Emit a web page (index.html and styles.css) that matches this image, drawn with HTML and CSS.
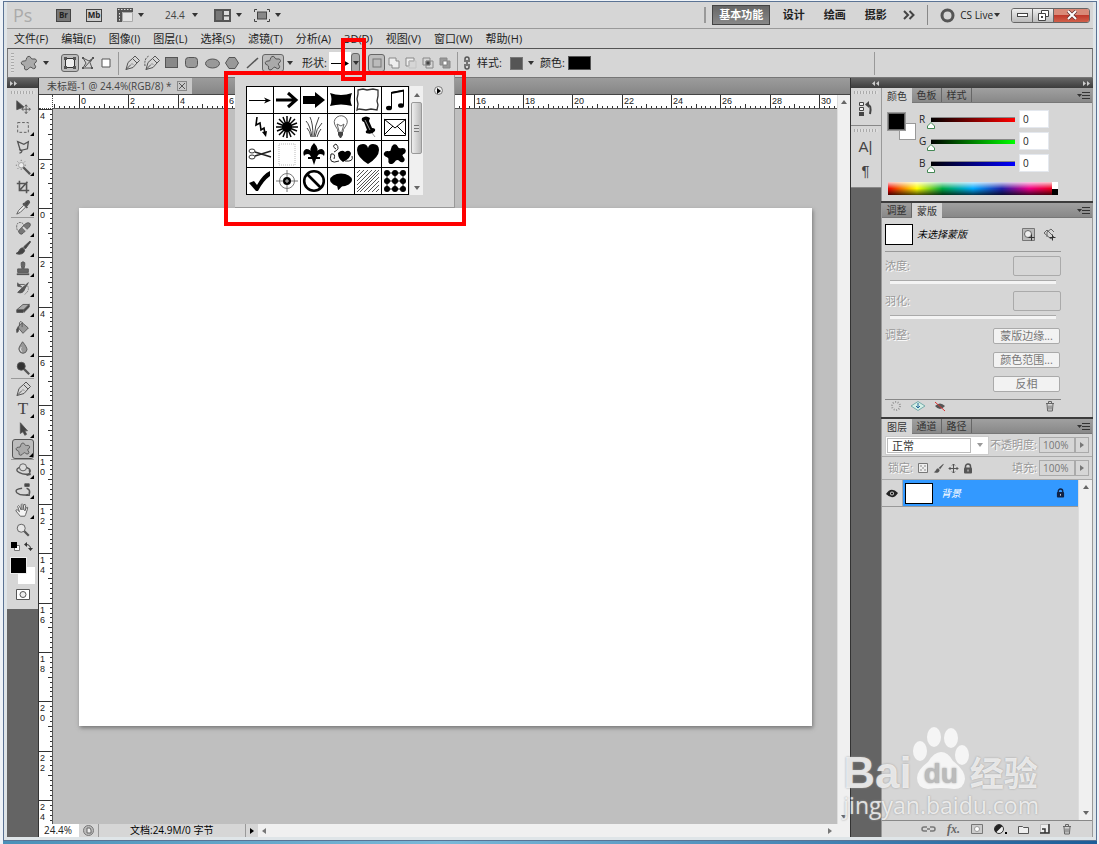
FILE: index.html
```html
<!DOCTYPE html>
<html lang="zh-CN">
<head>
  <meta charset="UTF-8">
  <meta name="viewport" content="width=device-width, initial-scale=1.0">
  <title>未标题-1 @ 24.4%(RGB/8)</title>
  <link rel="stylesheet" href="styles.css">
</head>
<body>
  <!-- shared symbols -->
  <svg class="defs" width="0" height="0">
    <symbol id="blob" viewBox="0 0 18 16"><path d="M8 1.500q2-1 3 1.500q.5 1.300 2 1q3-.8 3.500 1.500q0 2-2 2.800q-.8.700.3 1.700q1.700 1.800.2 3.300q-1.500 1-3-.4q-1-1.400-2.400-.4q-1.600 2.500-3.600 2.500q-2-.3-1.500-2.800q.2-1.500-1-2Q.8 9.400 1.300 7.500Q2 5.800 4 6q2.300.4 2.200-1.500Q6.500 2.300 8 1.500z"/></symbol>
    <symbol id="pen" viewBox="0 0 16 16"><path d="M2 14.500L4 7.500l4.500-4 4.500 4.500-4 4.500zM2 14.500l5-5M8.500 3.500L11 1l4.500 4.500L13 8M8 8.500l1 1"/></symbol>
    <symbol id="brush" viewBox="0 0 16 16"><path d="M15 1L8.500 7l1.800 2L15.500 2zM7.600 7.800C4 8 5 12 1 13.500c3.500 1.500 8.500.5 8.700-3.500z" fill="currentColor"/></symbol>
    <symbol id="lock" viewBox="0 0 10 11"><path d="M2.500 5V3.500a2.500 2.500 0 0 1 5 0V5" fill="none" stroke="currentColor" stroke-width="1.500"/><rect x="1" y="4.500" width="8" height="6" rx="1" fill="currentColor"/><path d="M5 6.500v2" stroke="#ddd"/></symbol>
    <symbol id="trash" viewBox="0 0 12 12"><path d="M2 3.500h8M4.500 3V1.500h3V3M3 4l.6 7h4.800L9 4M5 5.500v4M7 5.500v4" fill="none" stroke="currentColor"/></symbol>
    <symbol id="flyout" viewBox="0 0 13 9"><path d="M0 3h5L2.500 6z" fill="currentColor"/><path d="M5 1.500h8M5 4.500h8M5 7.500h8" stroke="currentColor"/></symbol>
  </svg>

  <div class="desktop">
    <div class="window">
      <!-- title bar -->
      <header class="titlebar">
        <span class="ps">Ps</span>
        <button class="badge badge-br">Br</button>
        <button class="badge badge-mb">Mb</button>
        <button class="tb-btn film" aria-label="查看额外内容"><svg width="16" height="14" viewBox="0 0 16 14"><path d="M0 0h16v4H5v10H0z" fill="#555"/><path d="M1 1.500h14M2.500 5v9" stroke="#ddd" stroke-dasharray="1.500 1.500"/><path d="M5.500 4.500h10v9h-10z" fill="#e4e4e4" stroke="#aaa"/></svg><i class="caret"></i></button>
        <button class="tb-btn zoomlevel">24.4<i class="caret"></i></button>
        <button class="tb-btn arrange" aria-label="排列文档"><svg width="17" height="13" viewBox="0 0 17 13"><rect width="17" height="13" fill="#555"/><path d="M2 2h6v9H2z" fill="#777"/><path d="M10 2h5v4h-5zM10 7.500h5V11h-5z" fill="#ddd"/></svg><i class="caret"></i></button>
        <button class="tb-btn screen" aria-label="屏幕模式"><svg width="16" height="13" viewBox="0 0 16 13"><rect x="3.500" y="3" width="9" height="7" fill="#888" stroke="#444"/><path d="M.5 3V.5H3M13 .5h2.500V3M.5 10v2.500H3M13 12.500h2.500V10" fill="none" stroke="#444"/></svg><i class="caret"></i></button>

        <nav class="workspaces">
          <button class="ws active">基本功能</button>
          <button class="ws">设计</button>
          <button class="ws">绘画</button>
          <button class="ws">摄影</button>
          <button class="more" aria-label="更多"><svg width="12" height="10" viewBox="0 0 12 10"><path d="M1 1l4 4-4 4M6.500 1l4 4-4 4" fill="none" stroke="#444" stroke-width="2"/></svg></button>
        </nav>
        <button class="cslive"><svg width="15" height="15" viewBox="0 0 15 15"><circle cx="7.500" cy="7.500" r="5.500" fill="none" stroke="#555" stroke-width="3"/></svg>CS Live<i class="caret"></i></button>
        <div class="winbtns">
          <button class="min" aria-label="最小化"><svg width="11" height="6" viewBox="0 0 11 6"><rect x=".5" y="1.500" width="10" height="3" fill="#fff" stroke="#444"/></svg></button>
          <button class="max" aria-label="还原"><svg width="11" height="11" viewBox="0 0 11 11"><path d="M3.500.5h7v6h-7z" fill="#fff" stroke="#444"/><path d="M.5 3.500h7v7h-7z" fill="#fff" stroke="#444"/><path d="M3 6h2v2H3z" fill="#444"/></svg></button>
          <button class="close" aria-label="关闭"><svg width="12" height="10" viewBox="0 0 12 10"><path d="M2 1l8 8M10 1L2 9" stroke="#633" stroke-width="3.500"/><path d="M2 1l8 8M10 1L2 9" stroke="#fff" stroke-width="2"/></svg></button>
        </div>
      </header>

      <!-- menu bar -->
      <nav class="menubar">
        <a href="#">文件(F)</a><a href="#">编辑(E)</a><a href="#">图像(I)</a><a href="#">图层(L)</a><a href="#">选择(S)</a><a href="#">滤镜(T)</a><a href="#">分析(A)</a><a href="#">3D(D)</a><a href="#">视图(V)</a><a href="#">窗口(W)</a><a href="#">帮助(H)</a>
      </nav>

      <!-- options bar -->
      <div class="options">
        <i class="vgrip"></i>
        <button class="opt preset" aria-label="工具预设"><svg width="18" height="16" class="blob"><use href="#blob"/></svg></button>
        <i class="caret"></i>
        <div class="opt-group modes">
          <button class="opt on" aria-label="形状图层"><svg width="14" height="14" viewBox="0 0 14 14"><path d="M2.500 2.500h9v9h-9z" fill="#eee" stroke="#333"/><path d="M1 1h3v3H1zM10 1h3v3h-3zM1 10h3v3H1zM10 10h3v3h-3z" fill="#555"/></svg></button>
          <button class="opt" aria-label="路径"><svg width="14" height="14" viewBox="0 0 14 14"><path d="M2 2l3 5-3 5h9L9 6.500 12 2 8 5zM4 11l7-8" fill="none" stroke="#555"/><path d="M1 1h2v2H1zM11 1h2v2h-2zM1 11h2v2H1zM10 11h2v2h-2z" fill="#555"/></svg></button>
          <button class="opt" aria-label="填充像素"><svg width="10" height="10" viewBox="0 0 10 10"><path d="M1 1h8v8H1z" fill="#fff" stroke="#555"/></svg></button>
        </div>
        <i class="sep"></i>
        <div class="opt-group tools-row">
          <button class="opt" aria-label="钢笔"><svg width="16" height="16" class="line"><use href="#pen"/></svg></button>
          <button class="opt" aria-label="自由钢笔"><svg width="16" height="16" class="line"><use href="#pen"/><path d="M1 11Q0 3 5 1" stroke-dasharray="2 1"/></svg></button>
          <button class="opt" aria-label="矩形"><svg width="14" height="12"><rect x=".5" y=".5" width="12" height="10" fill="#888" stroke="#555"/></svg></button>
          <button class="opt" aria-label="圆角矩形"><svg width="14" height="12"><rect x=".5" y=".5" width="12" height="10" rx="3" fill="#999" stroke="#555"/></svg></button>
          <button class="opt" aria-label="椭圆"><svg width="15" height="11"><ellipse cx="7.500" cy="5.500" rx="7" ry="4.500" fill="#999" stroke="#555"/></svg></button>
          <button class="opt" aria-label="多边形"><svg width="14" height="12"><path d="M4 .5h6L13.500 6 10 11.500H4L.5 6z" fill="#999" stroke="#555"/></svg></button>
          <button class="opt" aria-label="直线"><svg width="13" height="12"><path d="M1 11L12 1" stroke="#555" stroke-width="1.500"/></svg></button>
          <button class="opt on wide" aria-label="自定形状"><svg width="18" height="16" class="blob"><use href="#blob"/></svg></button>
          <i class="caret"></i>
        </div>
        <span class="opt-label shape-label">形状:</span>
        <button class="shape-preview" aria-label="当前形状"><svg width="18" height="7" viewBox="0 0 18 7"><path d="M0 3.500h15" stroke="#000"/><path d="M12 0l6 3.500L12 7l2-3.500z"/></svg></button>
        <button class="shape-drop" aria-label="打开形状拾色器"><i class="caret"></i></button>
        <div class="opt-group combine">
          <button class="opt on" aria-label="新建"><svg width="12" height="12"><rect x="2" y="2" width="8" height="8" fill="#bbb" stroke="#777"/></svg></button>
          <button class="opt" aria-label="添加"><svg width="12" height="12" class="thin"><path d="M1 1h7v3h3v7H4V8H1z" fill="#eee"/></svg></button>
          <button class="opt" aria-label="减去"><svg width="12" height="12" class="thin"><path d="M1 1h8v3H4v5H1z" fill="#eee"/><path d="M4 4h7v7H4z" stroke="#c4c4c4"/></svg></button>
          <button class="opt" aria-label="交叉"><svg width="12" height="12" class="thin"><path d="M1 1h7v7H1zM4 4h7v7H4z"/><path d="M4 4h4v4H4z" fill="#444"/></svg></button>
          <button class="opt" aria-label="排除"><svg width="12" height="12" class="thin"><path d="M1 1h7v7H1zM4 4h7v7H4z" fill="#999"/><path d="M4 4h4v4H4z" fill="#fff"/></svg></button>
        </div>
        <i class="sep sep2"></i>
        <button class="link" aria-label="链接"><svg width="8" height="14" viewBox="0 0 8 14"><path d="M2 6V3a2 2 0 0 1 4 0v3M2 8v3a2 2 0 0 0 4 0V8M4 4v6" fill="none" stroke="#555" stroke-width="1.500"/></svg></button>
        <span class="opt-label">样式:</span>
        <button class="style-swatch" aria-label="样式"></button>
        <i class="caret"></i>
        <span class="opt-label color-label">颜色:</span>
        <button class="color-swatch" aria-label="颜色"></button>
        <i class="sep sep-end"></i>
      </div>

      <div class="workspace">
        <!-- toolbox -->
        <aside class="toolbox">
          <div class="dark-head left"><svg width="7" height="5" viewBox="0 0 7 5"><path d="M0 0l3 2.500L0 5zM4 0l3 2.500L4 5z" fill="#ccc"/></svg></div>
          <div class="tools">
            <i class="hgrip"></i>
            <button class="tool nofly" aria-label="移动"><svg viewBox="0 0 18 18"><path d="M2 2l8 7-8 3z" fill="#444"/><path d="M12.500 7v9M8 11.500h9M11 8.500l1.500-2 1.500 2M11 14.500l1.500 2 1.500-2M9.500 10l-2 1.500 2 1.500M15.500 10l2 1.500-2 1.500"/></svg></button>
            <button class="tool" aria-label="选框"><svg viewBox="0 0 18 18"><path d="M3 4h12v11H3z" stroke-dasharray="3 2"/></svg></button>
            <button class="tool" aria-label="套索"><svg viewBox="0 0 18 18"><path d="M3 3l7 3 5-3-1 8-8 2zM6 13l-1-2M6 12q3 1 1 3l-2 1" stroke-width="1.500"/></svg></button>
            <button class="tool" aria-label="魔棒"><svg viewBox="0 0 18 18"><path d="M9 9l8 8" stroke-width="2.500"/><circle cx="7" cy="7" r="3" fill="#eee" stroke="#999"/><path d="M7 1v2M7 11v2M1 7h2M11 7h2M3 3l1 1M11 3l-1 1M3 11l1-1" stroke-dasharray="1 1"/></svg></button>
            <button class="tool" aria-label="裁剪"><svg viewBox="0 0 18 18"><path d="M5 2v11h11M2 5h11v11M5 13l9-10" stroke-width="1.800"/></svg></button>
            <button class="tool" aria-label="吸管"><svg viewBox="0 0 18 18"><path d="M10 6l3-3q3-2 3 1l-3 4zM9 5l5 5" fill="#444" stroke-width="2"/><path d="M10 7l-6 6-2 4 4-2 6-6z" fill="#eee"/></svg></button>
            <i class="tsep"></i>
            <button class="tool" aria-label="修复画笔"><svg viewBox="0 0 18 18"><path d="M8 13Q1 14 2 6q1-4 5-3 3 1 3 4" stroke-dasharray="2 1"/><path d="M5 15q-2-2 0-4l7-7q3-2 5 0 1 2-1 4l-7 7q-2 2-4 0z" fill="#777"/><path d="M9 8l4 4" stroke="#ddd" stroke-width="2"/></svg></button>
            <button class="tool" aria-label="画笔"><svg viewBox="0 0 16 16"><use href="#brush"/></svg></button>
            <button class="tool" aria-label="图章"><svg viewBox="0 0 18 18"><path d="M7 3q2-2 4 0v3l-1 4h5v4H3v-4h5L7 6z" fill="#666"/><path d="M2 16h14" stroke-width="2"/></svg></button>
            <button class="tool" aria-label="历史记录画笔"><svg viewBox="0 0 18 18"><path d="M3 5h8M3 3v4l5 1M15 3L8 9l-5 5q6 2 8-4z" fill="#555"/><path d="M13 5q5 6-2 11" stroke-dasharray="1 1"/></svg></button>
            <button class="tool" aria-label="橡皮擦"><svg viewBox="0 0 18 18"><path d="M2 11l7-6h7l-6 6z" fill="#aaa"/><path d="M2 11v3h7l1-3M10 14l6-6V5l-6 6z" fill="#444"/></svg></button>
            <button class="tool" aria-label="油漆桶"><svg viewBox="0 0 18 18"><path d="M3 8l5-5 7 6-6 6z" fill="#999"/><path d="M5 7V3q2-3 3 0v5"/><path d="M4 8q-3 1-2 6 2 0 2-3z" fill="#444"/></svg></button>
            <button class="tool" aria-label="模糊"><svg viewBox="0 0 18 18"><path d="M8.500 2q-5 7-4 9 1 4 4.500 4t4.500-4q0-3-5-9z" fill="#999"/><path d="M7 8q-2 4 1 5" stroke="#eee"/></svg></button>
            <button class="tool" aria-label="减淡"><svg viewBox="0 0 18 18"><circle cx="7" cy="7" r="4.500" fill="#333"/><path d="M10 10l6 6" stroke-width="2.500"/></svg></button>
            <i class="tsep"></i>
            <button class="tool" aria-label="钢笔"><svg viewBox="0 0 16 16"><use href="#pen"/></svg></button>
            <button class="tool type" aria-label="文字">T</button>
            <button class="tool" aria-label="路径选择"><svg viewBox="0 0 18 18"><path d="M6 2v12l3-2 2 4 2-1-2-4h3z" fill="#444"/></svg></button>
            <button class="tool on" aria-label="自定形状"><svg viewBox="0 0 18 16" class="blob"><use href="#blob"/></svg></button>
            <i class="tsep"></i>
            <button class="tool" aria-label="3D 旋转"><svg viewBox="0 0 18 18"><circle cx="9" cy="6" r="4" fill="#ddd"/><path d="M5 6q-6 3 0 6 6 3 11 1M16 9l1 5-4 1M13 6q5 2 4 5" stroke-width="1.500"/></svg></button>
            <button class="tool" aria-label="3D 相机"><svg viewBox="0 0 18 18"><path d="M8 7q-9 1-6 5 5 4 13 2M13 7q5 2 3 7M16 11l0 4-4 0" stroke-width="1.500"/><path d="M11 2h5v3h-5z" fill="#444"/></svg></button>
            <button class="tool" aria-label="抓手"><svg viewBox="0 0 18 18"><path d="M6 16l-5-6q0-2 2-1l2 2-2-6q1-2 2 0l2 4V3q1-2 2 0v6l1-6q2-1 2 1l-1 6 2-4q2-1 1 2l-2 6-1 2z" fill="#f4f4f4"/></svg></button>
            <button class="tool nofly" aria-label="缩放"><svg viewBox="0 0 18 18"><circle cx="7" cy="7" r="4.500" fill="#e8e8e8"/><path d="M10.500 10.500l5 5" stroke-width="2.500"/></svg></button>
            <div class="mini-row">
              <button aria-label="默认颜色"><svg width="9" height="9"><path d="M3.500 3.500h5v5h-5z" fill="#fff" stroke="#777"/><path d="M0 0h6v6H0z"/></svg></button>
              <button aria-label="切换颜色"><svg width="9" height="9"><path d="M2 2.500q4.500 0 4.500 4.500" fill="none" stroke="#333"/><path d="M0 2.500L3 0v5zM6.500 9L4 6h5z" fill="#333"/></svg></button>
            </div>
            <div class="fgbg"><button class="bg" aria-label="背景色"></button><button class="fg" aria-label="前景色"></button></div>
            <button class="quickmask" aria-label="快速蒙版"><svg width="14" height="11"><path d="M.5.500h13v10H.5z" fill="#fff" stroke="#555"/><circle cx="7" cy="5.500" r="3" fill="#eee" stroke="#555"/></svg></button>
          </div>
        </aside>

        <!-- document -->
        <main class="document">
          <div class="doc-tabs"><div class="doc-tab">未标题-1 @ 24.4%(RGB/8) *<button aria-label="关闭文档"><svg width="6" height="6"><path d="M0 0l6 6M6 0L0 6" stroke="#555"/></svg></button></div></div>
          <div class="doc-body">
            <div class="ruler-corner"></div>
            <svg class="ruler-h" id="rulerH"></svg>
            <svg class="ruler-v" id="rulerV"></svg>
            <div class="canvas-area"><div class="canvas"></div></div>
            <div class="vscroll"><i class="up"></i><i class="down"></i></div>
          </div>
          <footer class="status">
            <input class="status-zoom" aria-label="缩放" value="24.4%">
            <button class="status-icon" aria-label="版本"><svg width="11" height="11"><circle cx="5.500" cy="5.500" r="5" fill="#bbb" stroke="#777"/><path d="M4 3h3l1 2v3H4z" fill="#eee" stroke="#666"/></svg></button>
            <span class="status-doc">文档:24.9M/0 字节</span>
            <button class="status-next" aria-label="状态菜单"><i class="right"></i></button>
            <div class="hscroll"><i class="left"></i><i class="right"></i></div>
          </footer>
        </main>

        <!-- docks -->
        <div class="docks">
          <div class="dark-head both"><svg width="7" height="5" viewBox="0 0 7 5"><path d="M3 0L0 2.500 3 5zM7 0L4 2.500 7 5z" fill="#ccc"/></svg><svg width="7" height="5" viewBox="0 0 7 5"><path d="M0 0l3 2.500L0 5zM4 0l3 2.500L4 5z" fill="#ccc"/></svg></div>
          <div class="dock-cols">
            <aside class="icon-dock">
              <div class="icon-group"><i class="hgrip"></i>
                <button aria-label="历史记录"><svg width="14" height="16" viewBox="0 0 14 16"><path d="M.5 1.500h4v3h-4zM.5 6.500h4v3h-4z" fill="#eee" stroke="#444"/><path d="M0 11h5v4H0z" fill="#444"/><path d="M8 4q5-1 3 9" fill="none" stroke="#444" stroke-width="2"/><path d="M10 0v7L6 3.500z" fill="#444"/></svg></button>
              </div>
              <div class="icon-group"><i class="hgrip"></i>
                <button class="char" aria-label="字符">A|</button>
                <button class="char" aria-label="段落">¶</button>
              </div>
            </aside>

            <aside class="panels">
              <section class="panel color-panel">
                <div class="tabs"><button class="tab on">颜色</button><button class="tab">色板</button><button class="tab">样式</button><button class="fly" aria-label="面板菜单"><svg width="13" height="9"><use href="#flyout"/></svg></button></div>
                <div class="color-body">
                  <div class="color-top">
                    <div class="pair"><button class="bg" aria-label="背景色"></button><button class="fg" aria-label="前景色"></button></div>
                    <div class="sliders">
                      <div class="srow"><label for="r">R</label><input class="r" id="r" type="range" min="0" max="255" value="0"><input type="text" aria-label="R 值" value="0"></div>
                      <div class="srow"><label for="g">G</label><input class="g" id="g" type="range" min="0" max="255" value="0"><input type="text" aria-label="G 值" value="0"></div>
                      <div class="srow"><label for="b">B</label><input class="b" id="b" type="range" min="0" max="255" value="0"><input type="text" aria-label="B 值" value="0"></div>
                    </div>
                  </div>
                  <div class="spectrum"><i></i></div>
                </div>
              </section>

              <section class="panel mask-panel">
                <div class="tabs"><button class="tab">调整</button><button class="tab on">蒙版</button><button class="fly" aria-label="面板菜单"><svg width="13" height="9"><use href="#flyout"/></svg></button></div>
                <div class="mask-body">
                  <div class="mask-top">
                    <i class="thumb"></i><span>未选择蒙版</span>
                    <button aria-label="像素蒙版"><svg width="13" height="13"><path d="M.5.500h12v12H.5z" fill="#bbb" stroke="#777"/><circle cx="6" cy="6" r="3.500" fill="#eee" stroke="#666"/><path d="M9.500 6.500v6M6.500 9.500h6" stroke="#333"/></svg></button>
                    <button aria-label="矢量蒙版"><svg width="13" height="13"><path d="M1 5l3-3 7 7-3 2zM4 9V4l4-3 3 3" fill="none" stroke="#666"/><path d="M9.500 6.500v6M6.500 9.500h6" stroke="#333"/></svg></button>
                  </div>
                  <div class="mrow"><label for="density">浓度:</label><input id="densityVal" aria-label="浓度值" type="text" disabled></div>
                  <input class="flat" id="density" type="range" disabled>
                  <div class="mrow"><label for="feather">羽化:</label><input id="featherVal" aria-label="羽化值" type="text" disabled></div>
                  <input class="flat" id="feather" type="range" disabled>
                  <div class="adjust"><span>调整:</span><div class="adjust-btns"><button disabled>蒙版边缘...</button><button disabled>颜色范围...</button><button disabled>反相</button></div></div>
                  <div class="mask-foot">
                    <button aria-label="载入选区"><svg width="12" height="12"><circle cx="6" cy="6" r="4" fill="none" stroke="#999" stroke-dasharray="1 1.500" stroke-width="2"/></svg></button>
                    <button aria-label="应用蒙版"><svg width="14" height="10"><path d="M0 5l7-4.500L14 5 7 9.500z" fill="#d4efe6" stroke="#7aa"/><path d="M7 2v5M5 5l2 2 2-2" fill="none" stroke="#269"/></svg></button>
                    <button aria-label="停用蒙版"><svg width="12" height="11"><path d="M1 5q5-5 10 0-5 6-10 0z" fill="#555"/><path d="M1 1l10 9" stroke="#d33"/></svg></button>
                    <button class="del" aria-label="删除蒙版"><svg width="12" height="12"><use href="#trash"/></svg></button>
                  </div>
                </div>
              </section>

              <section class="panel layer-panel">
                <div class="tabs"><button class="tab on">图层</button><button class="tab">通道</button><button class="tab">路径</button><button class="fly" aria-label="面板菜单"><svg width="13" height="9"><use href="#flyout"/></svg></button></div>
                <div class="lrow">
                  <div class="blend"><select aria-label="混合模式"><option>正常</option></select><i class="caret"></i></div>
                  <label class="dim" for="opacity">不透明度:</label>
                  <input id="opacity" type="text" value="100%" disabled><button class="step" aria-label="不透明度滑块"><i class="right"></i></button>
                </div>
                <div class="lrow">
                  <span class="dim lock-label">锁定:</span>
                  <button class="lk" aria-label="锁定透明像素"><svg width="10" height="10"><path d="M.5.500h9v9h-9z" fill="#eee" stroke="#777"/><path d="M2 2h2v2H2zM6 2h2v2H6zM4 4h2v2H4zM2 6h2v2H2zM6 6h2v2H6z" fill="#bbb"/></svg></button>
                  <button class="lk" aria-label="锁定图像像素"><svg width="11" height="11"><use href="#brush"/></svg></button>
                  <button class="lk" aria-label="锁定位置"><svg width="11" height="11"><path d="M5.500 1v9M1 5.500h9M4 2.500L5.500 1 7 2.500M4 8.500L5.500 10 7 8.500M2.500 4L1 5.500 2.500 7M8.500 4L10 5.500 8.500 7" fill="none" stroke="#555"/></svg></button>
                  <button class="lk" aria-label="锁定全部"><svg width="10" height="11"><use href="#lock"/></svg></button>
                  <label class="dim fill-label" for="fill">填充:</label>
                  <input id="fill" type="text" value="100%" disabled><button class="step" aria-label="填充滑块"><i class="right"></i></button>
                </div>
                <div class="layers">
                  <div class="layer-list">
                    <div class="layer">
                      <button class="eye" aria-label="可见性"><svg width="12" height="9"><path d="M0 5q5-8 12-1-5 8-12 1z" fill="#222"/><circle cx="6" cy="4.500" r="2" fill="#ccc"/><circle cx="6" cy="4.500" r="1"/></svg></button>
                      <div class="layer-main"><i class="thumb"></i><span>背景</span><svg class="lk" width="9" height="10"><use href="#lock"/></svg></div>
                    </div>
                  </div>
                  <div class="vscroll"><i class="up"></i><i class="down"></i></div>
                </div>
                <div class="layer-foot">
                  <button aria-label="链接图层"><svg width="15" height="8"><path d="M6 4H9M6 2H3a2 2 0 0 0 0 4h3M9 2h3a2 2 0 0 1 0 4H9" fill="none" stroke="#777" stroke-width="1.500"/></svg></button>
                  <button class="fx" aria-label="图层样式">fx.</button>
                  <button aria-label="添加蒙版"><svg width="12" height="10"><path d="M.5.500h11v9H.5z" fill="#ccc" stroke="#777"/><circle cx="6" cy="5" r="2.500" fill="#fff" stroke="#999"/></svg></button>
                  <button aria-label="调整图层"><svg width="13" height="10"><circle cx="5" cy="5" r="4.500" fill="#eee" stroke="#333"/><path d="M2 8.500A4.500 4.500 0 0 1 8.500 2z" fill="#222"/><path d="M11 8h2v2h-2z"/></svg></button>
                  <button aria-label="新建组"><svg width="11" height="9"><path d="M.5 1.500h4l1 1h5v6H.5z" fill="#eee" stroke="#555"/></svg></button>
                  <button aria-label="新建图层"><svg width="10" height="10"><path d="M.5.500h8v8h-8z" fill="#eee" stroke="#bbb"/><path d="M9 0v9H0M5 9V5H2" fill="none" stroke="#333" stroke-width="1.500"/></svg></button>
                  <button aria-label="删除图层"><svg width="12" height="12"><use href="#trash"/></svg></button>
                </div>
              </section>
            </aside>
          </div>
        </div>
      </div>
    </div>
    <div class="taskbar"></div>
  </div>

  <!-- shape picker popup -->
  <div class="picker">
    <div class="shape-grid">
      <button aria-label="箭头 1"><svg viewBox="0 0 26 26"><path d="M2 13.500h18" stroke="#000"/><path d="M17 10.500l7 3-7 3 2-3z"/></svg></button>
      <button aria-label="箭头 2"><svg viewBox="0 0 26 26"><path d="M2 13h19M14 6l8 7-8 7" fill="none" stroke="#000" stroke-width="3"/></svg></button>
      <button aria-label="箭头 3"><svg viewBox="0 0 26 26"><path d="M2 9h12V5l10 8-10 8v-4H2z"/></svg></button>
      <button aria-label="横幅"><svg viewBox="0 0 26 26"><path d="M2 6q11 4 22 0-3 7 0 13-11-3-22 0 3-7 0-13z"/></svg></button>
      <button aria-label="画框"><svg viewBox="0 0 26 26"><path d="M3 3l5-1 4 1 6-1 5 1v6l-1 5 1 4-1 5-6-1-5 1-7-1-2 1 1-6-1-5 1-5z" fill="none" stroke="#333" stroke-width="1.300"/></svg></button>
      <button aria-label="音符"><svg viewBox="0 0 26 26"><path d="M9.500 21V5.500l12-2V18" fill="none" stroke="#000"/><path d="M9 5l13-2.500v2L9 7z"/><ellipse cx="7" cy="21" rx="3" ry="2.300"/><ellipse cx="19" cy="18.500" rx="3" ry="2.300"/></svg></button>
      <button aria-label="闪电"><svg viewBox="0 0 26 26"><path d="M10 3l-1 8 4-2 1 7 3-2 1 6" fill="none" stroke="#000" stroke-width="1.600"/><path d="M15 18l5-1-1 6z"/></svg></button>
      <button aria-label="星爆"><svg viewBox="0 0 26 26"><circle cx="13" cy="13" r="5"/><path d="M13 2v22M2 13h22M5 5l16 16M21 5L5 21M9 3l8 20M17 3L9 23M3 9l20 8M3 17l20-8" stroke="#000" stroke-width="1.500"/></svg></button>
      <button aria-label="草"><svg viewBox="0 0 26 26"><path d="M11 23Q9 11 5 7M12 23Q12 9 9 3M13 23Q14 11 18 3M14 23q1-8 7-14M10 23q-1-6-4-9M16 23q2-6 4-8" fill="none" stroke="#444"/></svg></button>
      <button aria-label="灯泡"><svg viewBox="0 0 26 26"><path d="M10 18q0-3-2-5-4-6 1-10 5-3 9 1 3 4-1 9-2 2-2 5zM11 17l-2-7 4 2 3-2-2 7" fill="none" stroke="#666"/><path d="M10 18h5v3l-2 3h-1l-2-3z" fill="#444"/></svg></button>
      <button aria-label="图钉"><svg viewBox="0 0 26 26"><path d="M7 4q4-3 8 0l-1 3 3 7q4 0 3 3-3 4-9 2-1-2 1-3L9 8Q6 7 7 4z"/><path d="M10 6l5 10M17 19l3 4" stroke="#999"/></svg></button>
      <button aria-label="信封"><svg viewBox="0 0 26 26"><path d="M2.500 5.500h21v16h-21zM2 5l11 9L24 5M2 21l9-9M24 21l-9-9" fill="none" stroke="#000"/></svg></button>
      <button aria-label="剪刀"><svg viewBox="0 0 26 26"><ellipse cx="5" cy="10" rx="3" ry="2" fill="none" stroke="#333"/><ellipse cx="5" cy="16" rx="3" ry="2" fill="none" stroke="#333"/><path d="M8 11l16 5M8 15l16-5" stroke="#222" stroke-width="1.500"/></svg></button>
      <button aria-label="邮票"><svg viewBox="0 0 26 26"><path d="M5 3h16v21H5z" fill="none" stroke="#bbb" stroke-dasharray="1 1"/></svg></button>
      <button aria-label="百合花"><svg viewBox="0 0 26 26"><path d="M13 2q6 6 2 11 1-5 6-5 4 2 2 7-1-2-4-2-2 0-3 3h3v2h-4l-2 6-2-6H7v-2h3q-1-3-3-3-3 0-4 2-2-5 2-7 5 0 6 5-4-5 2-11z"/></svg></button>
      <button aria-label="装饰"><svg viewBox="0 0 26 26"><path d="M10 12q4-4 7-1 4-3 6 1 0 5-8 9-5-3-5-9z"/><path d="M11 20Q0 24 3 13q5-1 3 5M6 11q7-3 2-8-5 2 0 5M17 20q9 1 7-5" fill="none" stroke="#222"/></svg></button>
      <button aria-label="心形"><svg viewBox="0 0 26 26"><path d="M13 23Q2 16 2 9q0-6 6-6 4 0 5 4 1-4 5-4 6 0 6 6 0 7-11 14z"/></svg></button>
      <button aria-label="墨点"><svg viewBox="0 0 18 16"><use href="#blob"/></svg></button>
      <button aria-label="复选标记"><svg viewBox="0 0 26 26"><path d="M2 15l5-2 3 4Q16 6 23 3v5Q16 13 11 23H9z"/></svg></button>
      <button aria-label="靶心"><svg viewBox="0 0 26 26"><circle cx="13" cy="13" r="7.500" fill="none" stroke="#777"/><circle cx="13" cy="13" r="4"/><path d="M13 2v7M13 17v7M2 13h7M17 13h7" stroke="#777"/><path d="M13 11v4M11 13h4" stroke="#bbb"/></svg></button>
      <button aria-label="禁止"><svg viewBox="0 0 26 26"><circle cx="13" cy="13" r="9.800" fill="none" stroke="#000" stroke-width="2.600"/><path d="M6 6l14 14" stroke="#000" stroke-width="2.600"/></svg></button>
      <button aria-label="对话"><svg viewBox="0 0 26 26"><ellipse cx="13" cy="12" rx="11" ry="6.500"/><path d="M9 17l1 5q1 0 5-5z"/></svg></button>
      <button aria-label="斜线"><svg viewBox="0 0 26 26"><path d="M2 5l3-3M2 9l7-7M2 13L13 2M2 17L17 2M2 21L21 2M2 24L24 2M5 24L24 5M9 24L24 9M13 24l11-11M17 24l7-7M21 24l3-3" stroke="#555"/></svg></button>
      <button aria-label="圆点"><svg viewBox="0 0 26 26"><path d="M5 5h16M5 13h16M5 21h16M5 5v16M13 5v16M21 5v16" stroke="#000"/><path d="M5 5h0M13 5h0M21 5h0M5 13h0M13 13h0M21 13h0M5 21h0M13 21h0M21 21h0" stroke="#000" stroke-width="6" stroke-linecap="round"/></svg></button>
    </div>
    <div class="picker-scroll"><i class="up"></i><b></b><i class="down"></i></div>
    <button class="picker-menu" aria-label="形状菜单"><i class="right"></i></button>
  </div>

  <!-- highlights -->
  <div class="mark mark-picker"></div>
  <div class="mark mark-drop"></div>

  <!-- watermark -->
  <div class="watermark">
    <div class="wm-top">
      <span class="wm-bai">Bai</span>
      <span class="wm-paw"><svg width="58" height="64" viewBox="0 0 58 64"><ellipse cx="8" cy="25" rx="7" ry="10"/><ellipse cx="22" cy="11" rx="7" ry="10"/><ellipse cx="39" cy="12" rx="7" ry="10"/><ellipse cx="50" cy="29" rx="7" ry="10"/><path d="M29 26q7 0 12 9 12 9 12 18-1 10-11 10-13-2-26 0Q5 62 5 52q0-8 11-16 6-10 13-10z"/></svg><em>du</em></span>
      <span class="wm-cn">经验</span>
    </div>
    <div class="wm-url">jingyan.baidu.com</div>
  </div>

  <script>
    // pixels between two labelled ruler marks (2 cm)
    const STEP = 49.33;
    const NS = 'http://www.w3.org/2000/svg';

    function drawRuler(id, origin, first, last, vertical) {
      const svg = document.getElementById(id);
      let d = '';
      for (let v = first; v <= last; v += 2) {
        const start = origin + v / 2 * STEP;
        for (let i = 0; i < 10; i++) {
          const p = Math.round(start + i * STEP / 10) + 0.5;
          const len = i === 0 ? 14 : (i === 5 ? 5 : 3);
          d += vertical ? `M${14 - len} ${p}h${len}` : `M${p} ${14 - len}v${len}`;
        }
        if (start < -1) continue;
        // vertical labels put one digit per line
        const chars = vertical ? String(Math.abs(v)).split('') : [String(Math.abs(v))];
        chars.forEach((c, i) => {
          const t = document.createElementNS(NS, 'text');
          t.setAttribute('x', vertical ? 1 : Math.round(start) + 2);
          t.setAttribute('y', vertical ? Math.round(start) + 10 + i * 10 : 9);
          t.textContent = c;
          svg.appendChild(t);
        });
      }
      const path = document.createElementNS(NS, 'path');
      path.setAttribute('d', d);
      svg.appendChild(path);
    }

    drawRuler('rulerH', 26, -2, 30, false);
    drawRuler('rulerV', 99, -4, 24, true);
  </script>
</body>
</html>
```
FILE: styles.css
```css
* {
  box-sizing: border-box;
}
body {
  margin: 0;
  font-family: "Open Sans", "Noto Sans CJK SC", sans-serif;
  font-size: 11px;
  line-height: 14px;
  color: #222;
  background: #eef3f8;
  overflow: hidden;
}
button, input, select {
  font: inherit;
  color: inherit;
  border: 0;
  padding: 0;
  margin: 0;
  background: none;
  border-radius: 0;
}
button {
  display: flex;
  align-items: center;
  justify-content: center;
  flex: none;
}
svg {
  display: block;
  flex: none;
}
i {
  display: block;
  flex: none;
}
.defs {
  position: absolute;
}
.desktop {
  height: 100vh;
  display: flex;
  flex-direction: column;
  padding: 1px 2px 0 3px;
}
.window {
  flex: 1;
  min-height: 0;
  display: flex;
  flex-direction: column;
  border: 1px solid #5b7394;
  padding: 0 3px 3px;
  background: #dfe5e8;
}
.taskbar {
  height: 3px;
  background: linear-gradient(90deg, #4a90b8, #7ab8d8 40%, #1d5c98);
}

/* small arrows */
.caret {
  border: 3px solid transparent;
  border-top: 4px solid #333;
  border-bottom: 0;
}
.up {
  border: 3px solid transparent;
  border-bottom: 4px solid #666;
  border-top: 0;
}
.down {
  border: 3px solid transparent;
  border-top: 4px solid #666;
  border-bottom: 0;
}
i.right {
  border: 3px solid transparent;
  border-left: 4px solid #777;
  border-right: 0;
}
i.left {
  border: 3px solid transparent;
  border-right: 4px solid #777;
  border-left: 0;
}

/* title bar */
.titlebar {
  height: 27px;
  display: flex;
  align-items: center;
  background: #d6d6d6;
  border-bottom: 1px solid #9a9a9a;
  padding: 0 3px 0 6px;
}
.ps {
  width: 43px;
  font-size: 18px;
  line-height: 24px;
  color: #aaa;
}
.badge {
  height: 13px;
  font-size: 8px;
  font-weight: bold;
  border: 1px solid #444;
  background: #ccc;
}
.badge-br {
  width: 15px;
  background: #777;
  margin-right: 15px;
}
.badge-mb {
  width: 16px;
  margin-right: 15px;
}
.tb-btn {
  gap: 5px;
  color: #444;
}
.tb-btn.zoomlevel {
  margin-left: 21px;
  gap: 7px;
  font-size: 10px;
}
.arrange {
  margin-left: 16px;
}
.screen {
  margin-left: 12px;
}
.workspaces {
  margin-left: auto;
  display: flex;
  align-items: center;
  border-left: 2px solid #999;
  height: 16px;
  padding-left: 6px;
}
.ws {
  height: 20px;
  width: 41px;
  font-weight: bold;
}
.ws.active {
  width: 58px;
  margin-right: 3px;
  color: #fff;
  border: 1px solid #444;
  background: linear-gradient(#666, #888);
}
.more {
  width: 22px;
  margin-left: 2px;
}
.cslive {
  gap: 5px;
  height: 20px;
  margin-left: 7px;
  padding-left: 12px;
  border-left: 1px solid #888;
  font-size: 10px;
}
.cslive .caret {
  margin-left: -4px;
}
.winbtns {
  display: flex;
  margin-left: 11px;
  height: 15px;
  border: 1px solid #666;
  border-radius: 3px;
  overflow: hidden;
}
.min, .max {
  width: 21px;
  background: linear-gradient(#eee, #bbb);
  border-right: 1px solid #666;
}
.close {
  width: 35px;
  background: linear-gradient(#d98a78 45%, #c0392b 50%, #d0604a);
}

/* menu bar */
.menubar {
  height: 19px;
  display: flex;
  gap: 13px;
  align-items: center;
  padding-left: 7px;
  background: #d6d6d6;
}
.menubar a {
  color: #222;
  text-decoration: none;
  white-space: nowrap;
}

/* options bar */
.options {
  height: 30px;
  display: flex;
  align-items: center;
  background: #d6d6d6;
  border: 1px solid #777;
  border-top-color: #555;
  padding-left: 3px;
}
.vgrip {
  width: 3px;
  height: 20px;
  background: repeating-linear-gradient(#aaa 0 1px, #ddd 1px 3px);
  margin-right: 4px;
}
.opt {
  width: 20px;
  height: 18px;
}
.opt.on {
  border: 1px solid #666;
  border-radius: 3px;
  background: #bdbdbd;
}
.opt.wide {
  width: 22px;
}
.preset {
  width: 22px;
  margin-right: 3px;
}
.blob {
  fill: #aaa;
  stroke: #555;
}
.line, .thin {
  fill: none;
  stroke: #555;
}
.thin {
  stroke: #888;
}
.opt-group {
  display: flex;
  align-items: center;
}
.modes {
  margin-left: 12px;
}
.modes .opt {
  width: 18px;
}
.sep {
  width: 1px;
  height: 23px;
  background: #999;
  margin: 0 3px;
}
.tools-row .caret {
  margin-left: 3px;
}
.opt-label {
  white-space: nowrap;
}
.shape-label {
  margin-left: 9px;
  width: 27px;
}
.shape-preview {
  width: 22px;
  height: 22px;
  background: #fff;
}
.shape-drop {
  width: 9px;
  height: 20px;
  border: 1px solid #666;
  border-radius: 3px;
  background: #aaa;
}
.combine {
  margin-left: 8px;
}
.combine .opt {
  width: 17px;
}
.sep2 {
  margin: 0 4px;
}
.link {
  width: 10px;
  margin-right: 5px;
}
.style-swatch {
  width: 13px;
  height: 13px;
  background: #555;
  border: 1px solid #777;
  margin: 0 5px 0 8px;
}
.color-label {
  margin: 0 3px 0 6px;
}
.color-swatch {
  width: 23px;
  height: 14px;
  background: #000;
  border: 1px solid #555;
}
.sep-end {
  margin: 0 217px 0 auto;
}

.workspace {
  flex: 1;
  min-height: 0;
  display: flex;
  background: #646464;
}
.dark-head {
  height: 10px;
  display: flex;
  align-items: center;
  padding: 0 3px;
  background: linear-gradient(#666, #3c3c3c);
}
.dark-head.both {
  justify-content: space-between;
  padding-left: 21px;
}
.hgrip {
  width: 24px;
  height: 3px;
  margin: 3px auto;
  background: repeating-linear-gradient(90deg, #aaa 0 1px, #ddd 1px 3px);
}

/* toolbox */
.toolbox {
  width: 32px;
  border-right: 1px solid #333;
}
.tools {
  display: flow-root;
  background: #d6d6d6;
  padding-bottom: 9px;
}
.tool {
  position: relative;
  width: 22px;
  height: 20px;
  margin: 0 auto 0 5px;
}
.tool svg {
  width: 16px;
  height: 16px;
  fill: none;
  stroke: #555;
  color: #444;
}
.tool svg.blob {
  fill: #aaa;
}
.tool::after {
  content: "";
  position: absolute;
  right: 0;
  bottom: 1px;
  border: 2px solid #000;
  border-top-color: transparent;
  border-left-color: transparent;
}
.tool.nofly::after {
  display: none;
}
.tool.on {
  border: 1px solid #555;
  border-radius: 3px;
  background: #bdbdbd;
}
.tool.type {
  font-family: "Liberation Serif", serif;
  font-size: 17px;
  color: #444;
}
.tsep {
  height: 1px;
  margin: 0 4px;
  background: #999;
}
.mini-row {
  display: flex;
  justify-content: space-between;
  padding: 2px 5px 2px 4px;
  height: 13px;
}
.fgbg {
  display: grid;
  height: 31px;
  padding: 4px 3px 0 3px;
}
.fgbg button, .pair button {
  grid-area: 1 / 1;
}
.fgbg .fg {
  width: 17px;
  height: 17px;
  background: #000;
  border: 1px solid #eee;
}
.fgbg .bg {
  width: 17px;
  height: 17px;
  background: #fff;
  justify-self: end;
  align-self: end;
}
.quickmask {
  width: 15px;
  margin: 5px auto 0 8px;
}

/* document */
.document {
  flex: 1;
  min-width: 0;
  display: flex;
  flex-direction: column;
}
.doc-tabs {
  height: 17px;
  display: flex;
  background: linear-gradient(#9c9c9c, #868686);
  border-bottom: 1px solid #444;
}
.doc-tab {
  display: flex;
  align-items: center;
  gap: 6px;
  padding: 0 5px 0 8px;
  background: #c8c8c8;
  color: #444;
  font-size: 10px;
  white-space: nowrap;
}
.doc-tab button {
  width: 10px;
  height: 10px;
  border: 1px solid #888;
}
.doc-body {
  flex: 1;
  min-height: 0;
  display: grid;
  grid-template-columns: 14px 1fr 13px;
  grid-template-rows: 14px 1fr;
}
.ruler-corner {
  background: #fff;
  border-right: 1px dotted #444;
  border-bottom: 1px dotted #444;
}
.ruler-h, .ruler-v {
  width: 100%;
  height: 100%;
  min-height: 0;
  background: #fff;
  overflow: hidden;
}
.ruler-h path, .ruler-v path {
  stroke: #333;
  fill: none;
}
.ruler-h text, .ruler-v text {
  font-family: "Liberation Sans", sans-serif;
  font-size: 9px;
  fill: #222;
}
.ruler-h {
  border-bottom: 1px solid #555;
}
.ruler-v {
  grid-row: 2;
  grid-column: 1;
  border-right: 1px solid #555;
}
.canvas-area {
  grid-row: 2;
  grid-column: 2;
  min-height: 0;
  display: flex;
  padding: 99px 25px 98px 26px;
  background: #bfbfbf;
}
.canvas {
  flex: 1;
  background: #fff;
  box-shadow: 1px 2px 4px #777;
}
.vscroll {
  display: flex;
  flex-direction: column;
  align-items: center;
  justify-content: space-between;
  padding: 5px 0;
  background: #f0f0f0;
  border-left: 1px solid #ddd;
}
.doc-body .vscroll {
  grid-row: 1 / 3;
  grid-column: 3;
}
.status {
  height: 13px;
  display: flex;
  background: #d6d6d6;
  line-height: 13px;
}
.status-zoom {
  width: 40px;
  padding-left: 5px;
  background: #fff;
  font-size: 10px;
}
.status-icon {
  width: 20px;
  border-right: 1px solid #999;
}
.status-doc {
  width: 147px;
  padding-left: 31px;
  font-size: 10px;
  color: #000;
  border-right: 1px solid #999;
}
.status-next {
  width: 12px;
}
.status-next .right, .picker-menu .right {
  border-left-color: #000;
}
.hscroll {
  flex: 1;
  display: flex;
  align-items: center;
  justify-content: space-between;
  padding: 0 18px 0 4px;
  background: #f0f0f0;
}

/* docks */
.docks {
  width: 243px;
  display: flex;
  flex-direction: column;
  border-left: 1px solid #333;
}
.dock-cols {
  flex: 1;
  min-height: 0;
  display: flex;
}
.icon-dock {
  width: 30px;
}
.icon-group {
  display: flow-root;
  background: #d6d6d6;
  border-bottom: 1px solid #888;
  padding-bottom: 4px;
}
.icon-group button {
  width: 29px;
  height: 24px;
}
.icon-group .char {
  font-family: "Liberation Sans", sans-serif;
  font-size: 15px;
  color: #444;
}
.panels {
  flex: 1;
  min-width: 0;
  display: flex;
  flex-direction: column;
  gap: 2px;
  background: #3c3c3c;
}
.panel {
  background: #d6d6d6;
  border: 1px solid #999;
  border-width: 0 1px;
}
.tabs {
  height: 15px;
  display: flex;
  background: linear-gradient(#a0a0a0, #888);
  border-bottom: 1px solid #777;
}
.tab {
  width: 30px;
  font-size: 10px;
  color: #333;
  border-right: 1px solid #666;
}
.tab.on {
  background: #d6d6d6;
  height: 15px;
  border-right: 0;
}
.fly {
  margin: 0 2px 0 auto;
  color: #333;
}

/* color panel */
.color-body {
  height: 98px;
  padding: 5px 34px 5px 6px;
}
.color-top {
  display: flex;
}
.pair {
  display: grid;
  width: 28px;
  height: 27px;
  margin: 5px 3px 0 0;
}
.pair .fg {
  width: 17px;
  height: 17px;
  background: #000;
  border: 1px solid #666;
  outline: 1px solid #999;
}
.pair .bg {
  width: 17px;
  height: 17px;
  background: #fff;
  border: 1px solid #999;
  justify-self: end;
  align-self: end;
}
.sliders {
  flex: 1;
  min-width: 0;
  margin-right: 9px;
}
.srow {
  display: flex;
  align-items: center;
  height: 22px;
}
.srow label {
  width: 9px;
  font-size: 10px;
}
.srow input[type=range] {
  appearance: none;
  flex: 1;
  min-width: 0;
  height: 18px;
  margin-right: 1px;
}
.srow input[type=range]::-webkit-slider-runnable-track {
  height: 5px;
  margin: 0 3px;
  border-top: 1px solid #888;
}
.r::-webkit-slider-runnable-track {
  background: linear-gradient(90deg, #000, #f00);
}
.g::-webkit-slider-runnable-track {
  background: linear-gradient(90deg, #000, #0f0);
}
.b::-webkit-slider-runnable-track {
  background: linear-gradient(90deg, #000, #00f);
}
.srow input[type=range]::-webkit-slider-thumb {
  appearance: none;
  width: 8px;
  height: 7px;
  margin: 4px 0 0 -4px;
  background: url("data:image/svg+xml,%3Csvg xmlns='http://www.w3.org/2000/svg' width='8' height='7'%3E%3Cpath d='M4 .5L7.500 4v2.500h-7V4z' fill='%23fff' stroke='%23485'/%3E%3C/svg%3E");
}
.srow input[type=text] {
  width: 30px;
  height: 18px;
  padding-left: 3px;
  font-size: 10px;
  background: #fff;
  border: 1px solid #e4e8ee;
}
.spectrum {
  height: 13px;
  margin: 8px 0 0;
  display: flex;
  justify-content: flex-end;
  background: linear-gradient(rgba(255, 255, 255, .8), transparent 50%, rgba(0, 0, 0, .7)),
    linear-gradient(90deg, #e00, #ff0 17%, #0a4 32%, #0af 50%, #22a 67%, #e08 83%, #e00);
}
.spectrum i {
  width: 6px;
  background: linear-gradient(#fff 50%, #000 50%);
}

/* masks panel */
.mask-body {
  height: 199px;
  padding: 5px 31px 0 3px;
  color: #999;
}
.mask-top {
  display: flex;
  align-items: center;
  height: 29px;
  padding-bottom: 6px;
  border-bottom: 1px solid #999;
  color: #000;
}
.thumb {
  width: 28px;
  height: 21px;
  background: #fff;
  border: 1px solid #000;
}
.mask-top span {
  margin: 0 auto 0 4px;
  font-size: 10px;
  font-style: italic;
}
.mask-top button {
  margin-right: 3px;
  width: 18px;
}
.mrow {
  display: flex;
  justify-content: space-between;
  align-items: center;
  height: 20px;
  margin-top: 4px;
  text-shadow: 1px 1px #fff;
}
.mrow input {
  width: 48px;
  height: 20px;
  border: 1px solid #aaa;
  border-radius: 2px;
}
.flat {
  appearance: none;
  display: block;
  width: calc(100% - 10px);
  height: 4px;
  margin: 4px 5px 3px;
  background: #f4f4f4;
  border-top: 1px solid #aaa;
}
.flat + .mrow {
  margin-top: 7px;
}
.flat::-webkit-slider-thumb {
  appearance: none;
  width: 0;
}
.adjust {
  display: flex;
  justify-content: space-between;
  margin-top: 9px;
  text-shadow: 1px 1px #fff;
}
.adjust-btns {
  display: flex;
  flex-direction: column;
  gap: 8px;
  padding-right: 1px;
}
.adjust-btns button {
  width: 67px;
  height: 16px;
  color: #777;
  background: #f2f2f2;
  border: 1px solid #aaa;
  border-radius: 2px;
  line-height: 14px;
}
.mask-foot {
  display: flex;
  gap: 9px;
  margin-top: 7px;
  padding: 0 5px;
  border-top: 1px solid #888;
  color: #666;
}
.mask-foot .del {
  margin-left: auto;
}

/* layers panel */
.layer-panel {
  flex: 1;
  min-height: 0;
  display: flex;
  flex-direction: column;
}
.lrow {
  height: 23px;
  display: flex;
  align-items: center;
  padding: 0 3px;
  border-bottom: 1px solid #aaa;
}
.blend {
  display: flex;
  align-items: center;
  gap: 6px;
  width: 104px;
  height: 19px;
  padding: 0 5px 0 1px;
  background: #fff;
  border: 1px solid #ccc;
}
.blend select {
  appearance: none;
  flex: 1;
  height: 15px;
  padding-left: 4px;
  border: 1px solid #bbb;
  color: #333;
}
.blend .caret {
  border-top-color: #999;
}
.dim {
  color: #999;
  text-shadow: 1px 1px #fff;
  white-space: nowrap;
}
.lrow > .dim {
  margin-left: auto;
}
.lrow > .lock-label {
  margin: 0 3px;
}
.lrow input {
  width: 36px;
  height: 16px;
  margin-left: 2px;
  padding-left: 3px;
  color: #777;
  font-size: 10px;
  border: 1px solid #aaa;
}
.step {
  width: 14px;
  height: 16px;
  border: 1px solid #aaa;
}
.lk {
  width: 15px;
  color: #555;
}
.layers {
  flex: 1;
  min-height: 0;
  display: flex;
}
.layer-list {
  flex: 1;
}
.layer {
  display: flex;
  height: 27px;
  border-bottom: 1px solid #999;
}
.eye {
  width: 21px;
  border-right: 1px solid #aaa;
}
.layer-main {
  flex: 1;
  display: flex;
  align-items: center;
  padding: 0 13px 0 2px;
  background: #39f;
  color: #fff;
  font-size: 10px;
  font-style: italic;
}
.layer-main span {
  margin: 0 auto 0 8px;
}
.layer-main .lk {
  width: 9px;
  color: #124;
}
.layers .vscroll {
  width: 14px;
}
.layer-foot {
  height: 17px;
  display: flex;
  align-items: center;
  justify-content: flex-end;
  gap: 11px;
  padding-right: 19px;
  border-top: 1px solid #888;
  color: #666;
}
.layer-foot .fx {
  font-family: "Liberation Serif", serif;
  font-size: 12px;
  font-style: italic;
  font-weight: bold;
}

/* shape picker */
.picker {
  position: absolute;
  left: 235px;
  top: 74px;
  display: flex;
  align-items: flex-start;
  width: 220px;
  height: 134px;
  padding: 12px 0 0 11px;
  background: #d6d6d6;
  border: 1px solid #999;
  border-width: 0 1px 1px 0;
}
.shape-grid {
  display: grid;
  grid-template-columns: repeat(6, 26px);
  grid-auto-rows: 26px;
  gap: 1px;
  padding: 1px;
  background: #000;
}
.shape-grid button {
  background: #fff;
}
.shape-grid svg {
  width: 26px;
  height: 26px;
}
.picker-scroll {
  width: 13px;
  height: 109px;
  display: flex;
  flex-direction: column;
  align-items: center;
  padding: 7px 0 5px;
  background: #f0f0f0;
  margin-left: 1px;
}
.picker-scroll b {
  width: 11px;
  height: 52px;
  margin: 5px 0 auto;
  border: 1px solid #999;
  border-radius: 2px;
  background: repeating-linear-gradient(#777 0 1px, #ddd 1px 3px) center / 5px 7px no-repeat, linear-gradient(90deg, #eee, #bbb);
}
.picker-menu {
  width: 9px;
  height: 9px;
  margin: 0 0 0 11px;
  background: #eee;
  border: 1px solid #777;
  border-radius: 50%;
}

.mark {
  position: absolute;
  border: 4px solid #f00;
}
.mark-picker {
  left: 224px;
  top: 71px;
  width: 242px;
  height: 155px;
}
.mark-drop {
  left: 341px;
  top: 38px;
  width: 25px;
  height: 43px;
}

/* watermark */
.watermark {
  position: absolute;
  right: 60px;
  bottom: 24px;
  color: rgba(255, 255, 255, .75);
  text-shadow: 0 0 2px #999;
  pointer-events: none;
}
.wm-top {
  display: flex;
  align-items: flex-end;
}
.wm-bai {
  font: bold 44px/34px "Liberation Sans", sans-serif;
}
.wm-paw {
  display: grid;
}
.wm-paw svg {
  grid-area: 1 / 1;
  fill: rgba(255, 255, 255, .75);
}
.wm-paw em {
  grid-area: 1 / 1;
  align-self: end;
  justify-self: center;
  font: bold 28px/32px "Liberation Sans", sans-serif;
  color: #bbb;
}
.wm-cn {
  font-size: 34px;
  line-height: 34px;
  font-weight: bold;
}
.wm-url {
  font-size: 23px;
  line-height: 30px;
}
```
